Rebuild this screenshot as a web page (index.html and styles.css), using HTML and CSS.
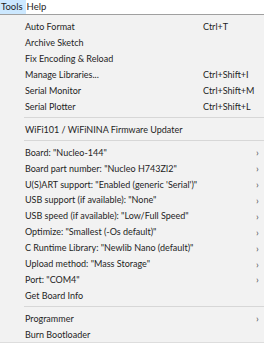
FILE: index.html
```html
<!DOCTYPE html>
<html>

<head>
	<title>Tools menu</title>
	<link rel="stylesheet" href="styles.css">
</head>

<body>
	<div class="menubar">
		<span class="top active">Tools</span>
		<span class="top">Help</span>
	</div>
	<div class="menu">
		<div class="item"><span class="label">Auto Format</span><span class="key">Ctrl+T</span></div>
		<div class="item"><span class="label">Archive Sketch</span></div>
		<div class="item"><span class="label">Fix Encoding &amp; Reload</span></div>
		<div class="item"><span class="label">Manage Libraries...</span><span class="key">Ctrl+Shift+I</span></div>
		<div class="item"><span class="label">Serial Monitor</span><span class="key">Ctrl+Shift+M</span></div>
		<div class="item"><span class="label">Serial Plotter</span><span class="key">Ctrl+Shift+L</span></div>
		<div class="sep"></div>
		<div class="item"><span class="label">WiFi101 / WiFiNINA Firmware Updater</span></div>
		<div class="sep"></div>
		<div class="item"><span class="label">Board: "Nucleo-144"</span><span class="arrow">&rsaquo;</span></div>
		<div class="item"><span class="label">Board part number: "Nucleo H743ZI2"</span><span class="arrow">&rsaquo;</span></div>
		<div class="item"><span class="label">U(S)ART support: "Enabled (generic 'Serial')"</span><span class="arrow">&rsaquo;</span></div>
		<div class="item"><span class="label">USB support (if available): "None"</span><span class="arrow">&rsaquo;</span></div>
		<div class="item"><span class="label">USB speed (if available): "Low/Full Speed"</span><span class="arrow">&rsaquo;</span></div>
		<div class="item"><span class="label">Optimize: "Smallest (-Os default)"</span><span class="arrow">&rsaquo;</span></div>
		<div class="item"><span class="label">C Runtime Library: "Newlib Nano (default)"</span><span class="arrow">&rsaquo;</span></div>
		<div class="item"><span class="label">Upload method: "Mass Storage"</span><span class="arrow">&rsaquo;</span></div>
		<div class="item"><span class="label">Port: "COM4"</span><span class="arrow">&rsaquo;</span></div>
		<div class="item"><span class="label">Get Board Info</span></div>
		<div class="sep"></div>
		<div class="item"><span class="label">Programmer</span><span class="arrow">&rsaquo;</span></div>
		<div class="item"><span class="label">Burn Bootloader</span></div>
	</div>
</body>

</html>
```

FILE: styles.css
```css
html,
body {
	margin: 0;
	padding: 0;
	background: #fff;
}

body {
	width: 264px;
	height: 346px;
	overflow: hidden;
	font-family: Lato, sans-serif;
	font-size: 9px;
	color: #1e1e1e;
}

.menubar {
	display: flex;
	height: 14px;
	background: #fff;
	font-size: 9.5px;
}

.top {
	display: flex;
	align-items: center;
	padding: 0 2px 0 1px;
	line-height: 14px;
}

.top.active {
	background: #cce8ff;
	padding-right: 3px;
}

.menu {
	display: flex;
	flex-direction: column;
	background: #f2f2f2;
	border-top: 1px solid #a0a0a0;
	border-bottom: 1px solid #ddd;
	padding-top: 1px;
	height: 329px;
	box-sizing: border-box;
}

.item {
	display: flex;
	align-items: center;
	height: 16.4px;
	padding-left: 25px;
	white-space: nowrap;
}

.item:first-child {
	margin-top: 3px;
}

.label {
	flex: 1 0 0;
}

.key {
	width: 61px;
}

.arrow {
	width: 8px;
	font-size: 10px;
	color: #555;
}

.sep {
	height: 1px;
	background: #d7d7d7;
	margin: 3px 0 3px 24px;
}
```
